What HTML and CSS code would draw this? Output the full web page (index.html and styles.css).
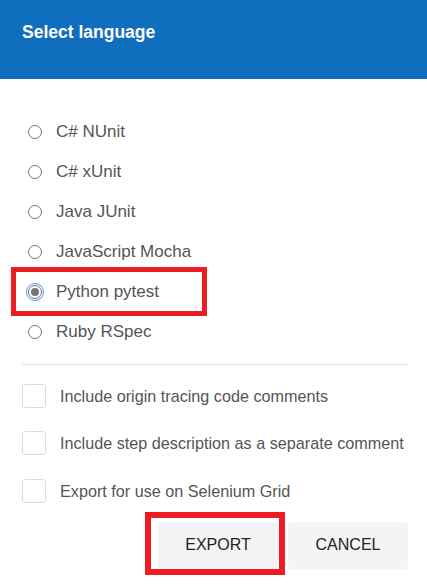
FILE: index.html
```html
<!DOCTYPE html>
<html>
<head>
<meta charset="utf-8">
<link rel="stylesheet" href="styles.css">
</head>
<body>
<div class="dialog">
  <div class="header"><h2 class="title">Select language</h2></div>
  <div class="body">
    <div class="radios">
      <label class="radio-row"><span class="radio"></span><span class="rlabel">C# NUnit</span></label>
      <label class="radio-row"><span class="radio"></span><span class="rlabel">C# xUnit</span></label>
      <label class="radio-row"><span class="radio"></span><span class="rlabel">Java JUnit</span></label>
      <label class="radio-row"><span class="radio"></span><span class="rlabel">JavaScript Mocha</span></label>
      <label class="radio-row"><span class="radio checked focused"></span><span class="rlabel">Python pytest</span></label>
      <label class="radio-row"><span class="radio"></span><span class="rlabel">Ruby RSpec</span></label>
    </div>
    <div class="divider"></div>
    <div class="checks">
      <label class="check-row"><span class="checkbox"></span><span class="clabel">Include origin tracing code comments</span></label>
      <label class="check-row"><span class="checkbox"></span><span class="clabel">Include step description as a separate comment</span></label>
      <label class="check-row"><span class="checkbox"></span><span class="clabel">Export for use on Selenium Grid</span></label>
    </div>
    <div class="actions">
      <button class="btn">EXPORT</button>
      <button class="btn">CANCEL</button>
    </div>
  </div>
  <div class="mark mark-python"></div>
  <div class="mark mark-export"></div>
</div>
</body>
</html>
```
FILE: styles.css
```css
html, body {
  margin: 0;
  padding: 0;
  background: #ffffff;
}
.dialog {
  position: relative;
  width: 427px;
  height: 586px;
  font-family: "Liberation Sans", Arial, sans-serif;
  overflow: hidden;
}
.header {
  height: 79px;
  background: #106ebe;
  box-sizing: border-box;
  padding: 22px 22px 0 22px;
}
.title {
  margin: 0;
  font-size: 17.5px;
  line-height: 20px;
  font-weight: bold;
  color: #ffffff;
}
.body {
  padding: 33px 18px 0 22px;
}
.radios {
  display: flex;
  flex-direction: column;
}
.radio-row {
  height: 40px;
  display: flex;
  align-items: center;
}
.radio {
  position: relative;
  width: 14px;
  height: 14px;
  box-sizing: border-box;
  border: 1px solid #767676;
  border-radius: 50%;
  margin-left: 6px;
  margin-right: 14px;
  background: #fff;
  flex: none;
}
.radio.checked::after {
  content: "";
  position: absolute;
  left: 2px;
  top: 2px;
  width: 8px;
  height: 8px;
  border-radius: 50%;
  background: #767676;
}
.radio.focused {
  outline: 1px solid #4d90fe;
  outline-offset: 1px;
}
.rlabel {
  font-size: 17px;
  color: #555555;
  line-height: 20px;
}
.divider {
  height: 1px;
  background: #e3e3e3;
  margin-top: 12px;
}
.checks {
  display: flex;
  flex-direction: column;
  padding-top: 7px;
}
.check-row {
  height: 47.5px;
  display: flex;
  align-items: center;
}
.checkbox {
  width: 24px;
  height: 24px;
  box-sizing: border-box;
  border: 1px solid #dcdcdc;
  border-radius: 3px;
  margin-right: 14px;
  flex: none;
}
.clabel {
  font-size: 16.2px;
  color: #555555;
  line-height: 20px;
}
.actions {
  display: flex;
  justify-content: flex-end;
  gap: 10px;
  margin-top: 7px;
  padding-right: 1px;
}
.btn {
  width: 120px;
  height: 47px;
  border: none;
  border-radius: 4px;
  background: #f4f4f4;
  font-family: "Liberation Sans", Arial, sans-serif;
  font-size: 16px;
  color: #222222;
  padding: 0;
}
.mark {
  position: absolute;
  box-sizing: border-box;
  border: 5px solid #ed1c24;
}
.mark-python {
  left: 11px;
  top: 267px;
  width: 196px;
  height: 49px;
}
.mark-export {
  left: 145px;
  top: 512px;
  width: 140px;
  height: 63px;
  border-width: 6px;
}
```
